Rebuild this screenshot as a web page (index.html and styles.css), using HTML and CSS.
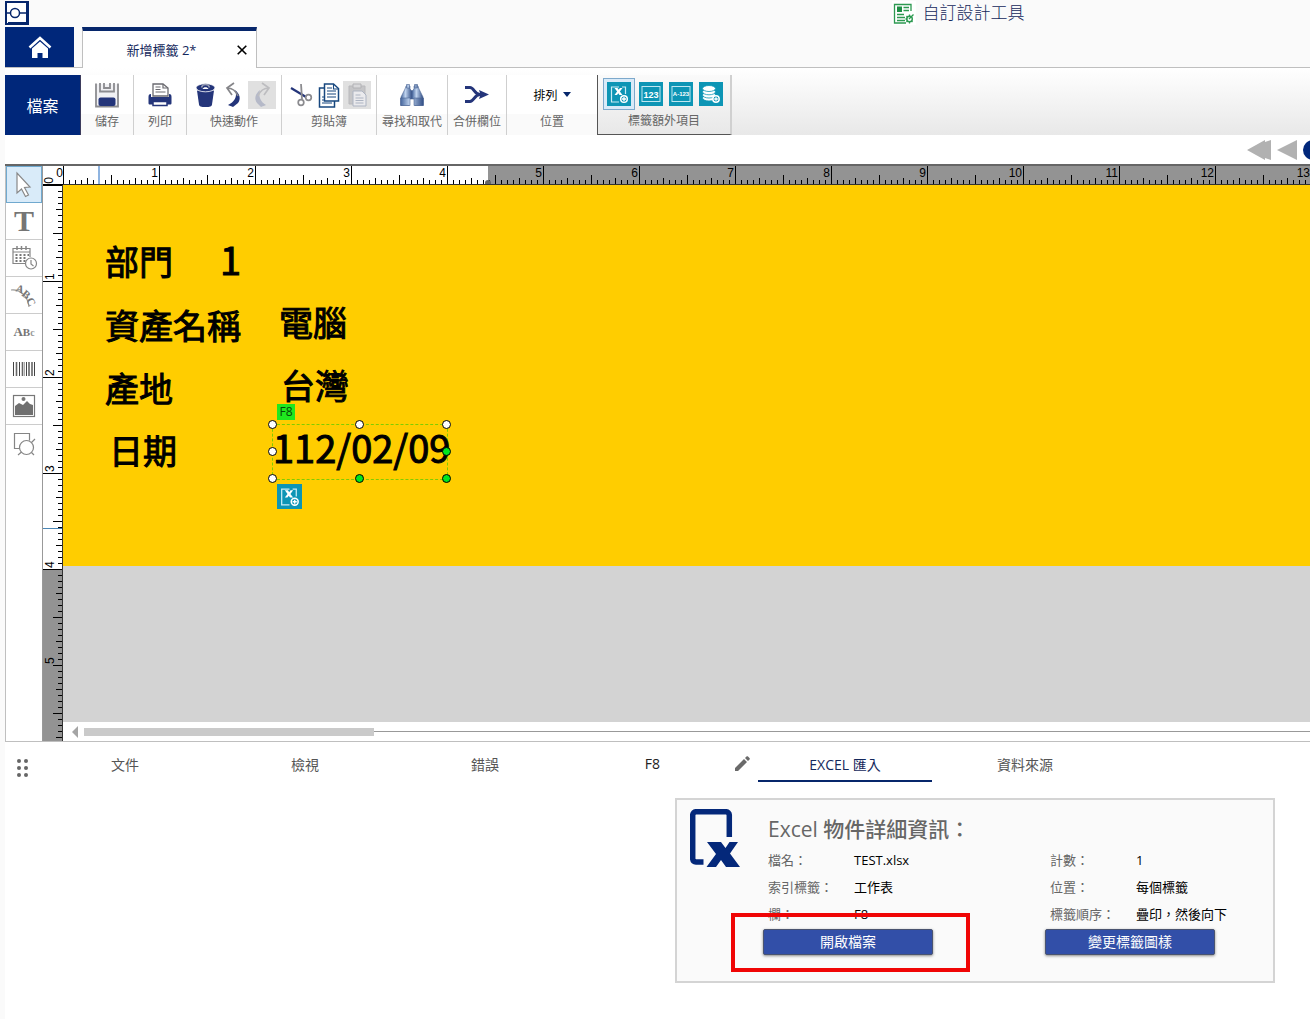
FILE: index.html
```html
<!DOCTYPE html>
<html lang="zh-Hant">
<head>
<meta charset="utf-8">
<title>新增標籤 2*</title>
<link rel="stylesheet" href="styles.css">
</head>
<body>
<svg class="defs" aria-hidden="true">
  <symbol id="excel-plus" viewBox="0 0 24 24">
    <rect width="24" height="24" fill="#0d95b5"/>
    <path d="M12 5H4.500v15H12M15 5h3.500v7" fill="none" stroke="#c9ecf5" stroke-width="1.200"/>
    <path d="M7.500 6h3l1.200 1.800L13 6h2.500l-2.600 3.500 2.600 3.500h-3l-1.200-1.800L10 13H7.500l2.600-3.500z" fill="#fff"/>
    <circle cx="17" cy="17" r="3.300" fill="none" stroke="#fff" stroke-width="1.500"/>
    <path d="M17 15v4M15 17h4" stroke="#fff" stroke-width="1.300"/>
  </symbol>
</svg>
<div class="app">
  <header class="header">
    <div class="titlebar">
      <svg class="logo" width="24" height="24" viewBox="0 0 24 24"><rect x="1" y="1" width="22" height="22" fill="#fff" stroke="#06266b" stroke-width="2"/><path d="M22 2v20H3" fill="none" stroke="#06266b" stroke-width="2"/><circle cx="10" cy="12" r="4.500" fill="none" stroke="#06266b" stroke-width="1.500"/><path d="M2 12h3.500M14.500 12H21" stroke="#06266b" stroke-width="1.500"/></svg>
      <a class="designer" href="#designer">
        <svg width="24" height="24" viewBox="0 0 24 24"><rect width="24" height="24" fill="#fff"/><path d="M19 10V3.500H2.500V22H14" fill="none" stroke="#2c9950" stroke-width="1.300"/><path d="M5 5.500h5V11H5z" fill="#1f8f45"/><path d="M11.500 6.500H17M11.500 9.500H17M5 13.500h7M5 16.500h8M5 19.500h8" stroke="#2c9950" stroke-width="1.600"/><circle cx="17.500" cy="18" r="2.800" fill="none" stroke="#2c9950" stroke-width="1.400"/><path d="M17.500 13.500v2M17.500 20.500v2M13.500 18h2M14.500 15l1.300 1.300M14.500 21l1.300-1.300M20.500 21l-1-1M17 18l4.500-4.500" stroke="#2c9950" stroke-width="1.300"/></svg>
        <span>自訂設計工具</span>
      </a>
    </div>
    <div class="tabs">
      <button class="home" aria-label="首頁"><svg width="24" height="24" viewBox="0 0 24 24"><path d="M1.500 12.500 12 3l10.500 9.500" fill="none" stroke="#fff" stroke-width="2.600"/><path d="M4 13.500 12 6.500l8 7V23h-5.500v-5h-5v5H4z" fill="#fff"/></svg></button>
      <div class="doc-tab"><span class="doc-name">新增標籤 2*</span><button class="close" aria-label="關閉"><svg width="10" height="10" viewBox="0 0 10 10"><path d="M.7.7l8.600 8.600M9.300.7.7 9.300" stroke="#000" stroke-width="1.600"/></svg></button></div>
    </div>
  </header>

  <nav class="ribbon">
    <button class="file">檔案</button>
    <section class="group save"><div class="icons"><button aria-label="儲存"><svg width="26" height="26" viewBox="0 0 26 26"><path d="M2 2v22h22V2z" fill="#f1f1f4"/><path d="M2 1.500v23h22v-23M6 1v8.500h14V1M10 1v5h6V1" fill="none" stroke="#8c8c90" stroke-width="1.800"/><rect x="4.500" y="15.500" width="17" height="8.500" rx="2" fill="#24357a"/></svg></button></div><h2>儲存</h2></section>
    <section class="group print"><div class="icons"><button aria-label="列印"><svg width="26" height="26" viewBox="0 0 26 26"><path d="M6 14V2h10l5 4v8z" fill="#fff" stroke="#6a6a70" stroke-width="1.300"/><path d="M16 2v4h5M8.500 5h5M8.500 7.500h5M8.500 10h10" fill="none" stroke="#6a6a70" stroke-width="1.200"/><path d="M4 12v3h18v-3c2 0 2.500 1 2.500 3v6c0 1-.5 1.500-1.500 1.500H3c-1 0-1.500-.5-1.500-1.500v-6c0-2 .5-3 2.500-3z" fill="#24357a"/><path d="M6 19.500h14v4H6z" fill="#fff" stroke="#24357a" stroke-width="1.500"/></svg></button></div><h2>列印</h2></section>
    <section class="group quick"><div class="icons">
      <button aria-label="刪除"><svg width="26" height="26" viewBox="0 0 26 26"><path d="M4 8.500h17l-2 14c-.4 2-2 2.500-6.500 2.500S6.400 24.500 6 22.500z" fill="#24357a"/><ellipse cx="12.500" cy="5.800" rx="9.500" ry="4" fill="#24357a" stroke="#fff" stroke-width=".8"/><path d="M8.500 5.500c1-4 7-4 8 0" fill="none" stroke="#9aa0b5" stroke-width="1.400"/><path d="M9.500 7c1-2.500 5-2.500 6 0z" fill="#fff"/></svg></button>
      <button aria-label="復原"><svg width="26" height="26" viewBox="0 0 26 26"><path d="M14 8c5 4 6 9 3 13l-5 4c-1-1-4-1-5-2 6-3 10-8 7-15z" fill="#24357a"/><path d="M13 1 6 6l5 7M6 6c5 0 9 3 11 8" fill="none" stroke="#858589" stroke-width="1.700"/></svg></button>
      <button class="off" disabled aria-label="重做"><svg width="26" height="26" viewBox="0 0 26 26"><path d="M11 8c-5 4-6 9-3 13l4 4c1-1 4-1 5-2-5-3-8-8-6-15z" fill="#b5b9c8"/><path d="m13 1 7 5-5 7M20 6c-5 0-9 3-11 8" fill="none" stroke="#bdbdc0" stroke-width="1.700"/></svg></button>
    </div><h2>快速動作</h2></section>
    <section class="group clip"><div class="icons">
      <button aria-label="剪下"><svg width="26" height="26" viewBox="0 0 26 26"><path d="m3 6 15 9" stroke="#24357a" stroke-width="2.200"/><path d="M13 2l1 15" stroke="#8b8b8f" stroke-width="1.800"/><circle cx="13" cy="20.500" r="2.800" fill="none" stroke="#8b8b8f" stroke-width="1.700"/><circle cx="20.500" cy="15.500" r="2.800" fill="none" stroke="#8b8b8f" stroke-width="1.700"/></svg></button>
      <button aria-label="複製"><svg width="26" height="26" viewBox="0 0 26 26"><path d="M3.500 6h12l3 3v16h-15z" fill="#fff" stroke="#17477f" stroke-width="1.500"/><path d="M6 15h8M6 18h8M6 21h10" stroke="#17477f"/><path d="M8.500 2h9l5 4.500V19h-14z" fill="#fff" stroke="#17477f" stroke-width="1.500"/><path d="M17.500 2v5h5M11 6h5M11 9h9M11 12h9M11 15h9" fill="none" stroke="#17477f" stroke-width="1.100"/></svg></button>
      <button class="off" disabled aria-label="貼上"><svg width="26" height="26" viewBox="0 0 26 26"><path d="M5 4h16v18H5z" fill="#c5c5c7" stroke="#b9b9bc"/><path d="M9 2h8v4H9z" fill="#d8d8da" stroke="#b2b2b5"/><path d="M9 9h9l4 4v11H9z" fill="#eaeaed" stroke="#adb4c2"/><path d="M11.500 13h5M11.500 16h8M11.500 18.500h8M11.500 21h8" stroke="#adb4c2"/></svg></button>
    </div><h2>剪貼簿</h2></section>
    <section class="group find"><div class="icons"><button aria-label="尋找和取代"><svg width="26" height="26" viewBox="0 0 26 26"><defs><linearGradient id="lens"><stop offset="0" stop-color="#42639b"/><stop offset=".4" stop-color="#c0d4ef"/><stop offset="1" stop-color="#304d85"/></linearGradient></defs><g fill="url(#lens)" stroke="#4b6493" stroke-width=".6"><path d="M7 4h4v3l2 2v8H10v6.500H2V15l3-6 1-2z"/><path d="M19 4h-4v3l-2 2v8h3v6.500h8V15l-3-6-1-2z"/><path d="M1.500 16h9.500v7.500H1.500zM15 16h9.500v7.500H15zM7.500 2.500h3V6h-3zM15.500 2.500h3V6h-3z"/></g></svg></button></div><h2>尋找和取代</h2></section>
    <section class="group merge"><div class="icons"><button aria-label="合併欄位"><svg width="26" height="26" viewBox="0 0 26 26"><path d="M1 5.500h5c4 0 4.500 7 10 7h3M1 19.500h5c4 0 4.500-7 10-7" fill="none" stroke="#24357a" stroke-width="3"/><path d="M15 8 25 12.500 15 17l1.500-4.500z" fill="#24357a"/></svg></button></div><h2>合併欄位</h2></section>
    <section class="group place"><div class="icons"><button class="arrange">排列 <svg width="8" height="5" viewBox="0 0 8 5"><path d="M0 0h8L4 5z" fill="#06266b"/></svg></button></div><h2>位置</h2></section>
    <section class="group extra"><div class="icons">
      <button class="on" aria-label="Excel"><svg width="24" height="24"><use href="#excel-plus"/></svg></button>
      <button aria-label="計數器"><svg width="24" height="24" viewBox="0 0 24 24"><rect width="24" height="24" fill="#0d95b5"/><rect x="3" y="4.500" width="18" height="15" fill="none" stroke="#bfe7f1"/><text x="12" y="15.500" class="badge-text num">123</text></svg></button>
      <button aria-label="序列"><svg width="24" height="24" viewBox="0 0 24 24"><rect width="24" height="24" fill="#0d95b5"/><rect x="3" y="4.500" width="18" height="15" fill="none" stroke="#bfe7f1"/><text x="12" y="14" class="badge-text seq">A-123</text></svg></button>
      <button aria-label="資料庫"><svg width="24" height="24" viewBox="0 0 24 24"><rect width="24" height="24" fill="#0d95b5"/><g fill="#fff" stroke="#0d95b5" stroke-width=".8"><ellipse cx="10" cy="16" rx="6.500" ry="3"/><ellipse cx="10" cy="13" rx="6.500" ry="3"/><ellipse cx="10" cy="9.800" rx="6.500" ry="3"/><ellipse cx="10" cy="6.500" rx="6.500" ry="3"/></g><circle cx="17" cy="17" r="3.200" fill="#0d95b5" stroke="#fff" stroke-width="1.500"/><path d="M17 15.200v3.600M15.200 17h3.600" stroke="#fff" stroke-width="1.300"/></svg></button>
    </div><h2>標籤額外項目</h2></section>
    <div class="ribbon-rest"></div>
  </nav>

  <div class="pager">
    <button aria-label="第一頁"><svg width="24" height="20" viewBox="0 0 24 20"><path d="M0 10 18 0v2l6-2v20l-6-2v2z" fill="#b1b1b1"/></svg></button>
    <button aria-label="上一頁"><svg width="20" height="20" viewBox="0 0 20 20"><path d="M0 10 20 0v20z" fill="#b1b1b1"/></svg></button>
    <button class="page" aria-label="目前頁"></button>
  </div>

  <main class="workspace">
    <div class="tools">
      <button class="on" aria-label="選取"><svg width="28" height="28" viewBox="0 0 28 28"><path d="M7 2v20l4.500-4 4 7.500 3-1.500-4-7.500 5.500-.5z" fill="#fff" stroke="#888" stroke-width="1.200"/></svg></button>
      <button class="type" aria-label="文字">T</button>
      <button aria-label="日期時間"><svg width="28" height="28" viewBox="0 0 28 28"><path d="M17 19.500H3V4.500h17V13M3 8h17" fill="none" stroke="#858585" stroke-width="1.200"/><path d="M7 2v4M11.500 2v4M16 2v4" stroke="#858585" stroke-width="1.500"/><path d="M5.500 11H19M5.500 14h11M5.500 17h11" stroke="#777" stroke-width="1.800" stroke-dasharray="2 2"/><circle cx="21" cy="19.500" r="5.500" fill="#fff" stroke="#858585" stroke-width="1.200"/><path d="M21 16v4l2.500 2" fill="none" stroke="#858585" stroke-width="1.200"/></svg></button>
      <button aria-label="弧形文字"><svg width="28" height="28" viewBox="0 0 28 28"><path d="M1 9c9-1 17 6 18 17" fill="none" stroke="#999" stroke-width="1.100"/><g class="arc-text"><text transform="translate(5 10) rotate(20)">A</text><text transform="translate(11 14) rotate(40)">B</text><text transform="translate(16 19) rotate(62)">C</text></g></svg></button>
      <button class="abc" aria-label="調整文字">A<small>B</small><sub>c</sub></button>
      <button aria-label="條碼"><svg width="28" height="28" viewBox="0 0 28 28"><path d="M3.500 7v14M9.500 7v14M16.500 7v14M24.500 7v14" stroke="#444" stroke-width="1"/><path d="M6.500 7v14M12.500 7v14M19 7v14M22 7v14" stroke="#666" stroke-width="1.600"/><path d="M14.500 7v14" stroke="#aaa"/></svg></button>
      <button aria-label="圖片"><svg width="28" height="28" viewBox="0 0 28 28"><rect x="3.500" y="3.500" width="21" height="21" fill="#fff" stroke="#777" stroke-width="1.200"/><path d="M5 23V14l4-3 4 2 4-4 3 3 3 1v10z" fill="#6f6f6f"/><circle cx="13.500" cy="7" r="2" fill="#777"/></svg></button>
      <button aria-label="圖形"><svg width="28" height="28" viewBox="0 0 28 28"><path d="M11 18.500H4.500v-15h15v7" fill="none" stroke="#858585" stroke-width="1.200"/><circle cx="16.500" cy="17.500" r="7" fill="#fff" stroke="#858585" stroke-width="1.200"/><path d="m8 25 3.500-3M21.500 12.500 25 9M21.500 22.500 24 25" stroke="#858585" stroke-width="1.200"/></svg></button>
    </div>
    <div class="ruler-corner"><span>0</span><span class="turned">0</span></div>
    <div class="ruler ruler-x"><span>1</span><span>2</span><span>3</span><span>4</span><span>5</span><span>6</span><span>7</span><span>8</span><span>9</span><span>10</span><span>11</span><span>12</span><span>13</span><i class="cursor"></i><i class="stop"></i></div>
    <div class="ruler ruler-y"><span>1</span><span>2</span><span>3</span><span>4</span><span>5</span><i class="cursor"></i></div>
    <div class="canvas">
      <div class="label">
        <p class="item t-dept">部門</p><p class="item t-one">1</p>
        <p class="item t-asset">資產名稱</p><p class="item t-pc">電腦</p>
        <p class="item t-origin">產地</p><p class="item t-tw">台灣</p>
        <p class="item t-date">日期</p>
        <div class="selected">
          <span class="field-tag">F8</span>
          <p class="field">112/02/09</p>
          <i class="h nw"></i><i class="h n"></i><i class="h ne"></i><i class="h w"></i><i class="h e green"></i><i class="h sw"></i><i class="h s green"></i><i class="h se green"></i>
          <svg class="field-icon" width="25" height="25"><use href="#excel-plus"/></svg>
        </div>
      </div>
      <div class="scroll"><svg width="6" height="12" viewBox="0 0 6 12"><path d="M6 0v12L0 6z" fill="#a5a5a5"/></svg><div class="thumb"></div><div class="track"></div></div>
    </div>
  </main>

  <nav class="panel-tabs">
    <svg class="grip" width="12" height="19" viewBox="0 0 12 19"><g fill="#666"><circle cx="2" cy="2" r="2"/><circle cx="9" cy="2" r="2"/><circle cx="2" cy="9" r="2"/><circle cx="9" cy="9" r="2"/><circle cx="2" cy="16" r="2"/><circle cx="9" cy="16" r="2"/></g></svg>
    <button>文件</button>
    <button>檢視</button>
    <button>錯誤</button>
    <button class="named"><span>F8</span><svg width="16" height="16" viewBox="0 0 16 16"><path d="M1 15v-3l9-9 3 3-9 9zM11 2l1.500-1.500c.5-.5 1-.5 1.500 0L15.500 2c.5.5.5 1 0 1.500L14 5z" fill="#6a6a6a"/></svg></button>
    <button class="active">EXCEL 匯入</button>
    <button>資料來源</button>
  </nav>

  <section class="panel">
    <div class="card">
      <svg class="card-icon" width="50" height="59" viewBox="0 0 50 59"><path d="M13.500 53H6A3.500 3.500 0 0 1 2.700 50V6A3.500 3.500 0 0 1 6 2.700h30A3.500 3.500 0 0 1 39.300 6v22" fill="none" stroke="#04287a" stroke-width="5.500"/><path d="M17 33h14l4.500 6 4-6H48L40 44.500 50 58H36l-5-7-5 7H16.500L26 45z" fill="#04287a"/></svg>
      <div class="details">
        <h1>Excel 物件詳細資訊：</h1>
        <div class="columns">
          <div class="col">
            <dl><dt>檔名：</dt><dd>TEST.xlsx</dd><dt>索引標籤：</dt><dd>工作表</dd><dt>欄：</dt><dd>F8</dd></dl>
            <button class="action">開啟檔案</button>
          </div>
          <div class="col">
            <dl><dt>計數：</dt><dd>1</dd><dt>位置：</dt><dd>每個標籤</dd><dt>標籤順序：</dt><dd>疊印，然後向下</dd></dl>
            <button class="action">變更標籤圖樣</button>
          </div>
        </div>
      </div>
      <div class="highlight"></div>
    </div>
  </section>
</div>
</body>
</html>
```
FILE: styles.css
```css
* { box-sizing: border-box; }
body {
  margin: 0;
  background: #fafafa;
  font-family: "Open Sans", "Noto Sans CJK TC", sans-serif;
  font-size: 13px;
  color: #000;
}
button {
  margin: 0;
  padding: 0;
  border: 0;
  background: none;
  font: inherit;
  color: inherit;
  display: flex;
  align-items: center;
  justify-content: center;
  flex: none;
}
svg { display: block; flex: none; }
h1, h2, p, dl, dd { margin: 0; font-weight: 400; }
.defs { position: absolute; width: 0; height: 0; }
.app { margin-left: 5px; min-height: 100vh; background: #fff; overflow: hidden; }

.header { background: #fafafa; border-bottom: 1px solid #bfbfbf; }
.titlebar { height: 27px; padding-bottom: 2px; display: grid; grid-template-columns: 68% auto; align-items: center; }
.designer { display: flex; align-items: center; gap: 6px; font-size: 17px; line-height: 24px; color: #14285c; text-decoration: none; font-weight: 300; }
.tabs { display: flex; gap: 8px; height: 40px; }
.home { width: 69px; height: 40px; background: #00277a; }
.doc-tab {
  width: 175px;
  height: 41px;
  display: flex;
  align-items: center;
  background: #fff;
  border: 1px solid #bfbfbf;
  border-top: 4px solid #06266b;
  border-bottom: 0;
}
.doc-name { flex: 1; padding-left: 12px; text-align: center; color: #14285c; }
.close { width: 28px; height: 30px; }

.ribbon { display: flex; height: 67px; padding-top: 7px; background: linear-gradient(#fff, #e8e8e8); }
.file { width: 76px; background: #00277a; border-right: 1px solid #3b3b5c; color: #fff; font-size: 16px; }
.group {
  display: flex;
  flex-direction: column;
  flex: none;
  background: linear-gradient(#fff 39px, #fafafa 39px);
  border-right: 1px solid #cfcfcf;
}
.icons { height: 39px; display: flex; align-items: center; justify-content: center; }
.group h2 { font-size: 12px; line-height: 16px; color: #666; text-align: center; white-space: nowrap; }
.save, .print { width: 53px; }
.quick, .clip { width: 95px; }
.find { width: 71px; }
.merge { width: 59px; }
.place { width: 90px; border-right: 0; }
.quick .icons button, .clip .icons button { width: 28px; height: 28px; }
.off { background: #e0e0e0; }
.arrange { gap: 5px; font-size: 12px; }
.extra { width: 135px; background: linear-gradient(#fafafa, #e8e8e8); border-left: 1px solid #555; border-right: 2px solid #d0d0d0; border-bottom: 1px solid #555; }
.extra .icons { gap: 6px; height: 38px; }
.extra .icons .on { width: 32px; height: 32px; margin: 0 -2px; background: #d9eaf8; border: 1px solid #7da9cc; }
.badge-text { fill: #fff; text-anchor: middle; font-family: "Liberation Sans", sans-serif; font-weight: 700; }
.num { font-size: 9px; }
.seq { font-size: 6px; }
.ribbon-rest { flex: 1; }

.pager { height: 29px; display: flex; align-items: center; justify-content: flex-end; gap: 6px; overflow: hidden; }
.page { width: 20px; height: 20px; border-radius: 50%; background: #00277a; margin-right: -13px; }

.workspace {
  display: grid;
  grid-template: 19px 556px / 38px 20px minmax(0, 1fr);
  border-top: 2px solid #666;
  border-bottom: 1px solid #bfbfbf;
}
.tools { grid-row: 1 / 3; border-left: 1px solid #bfbfbf; border-right: 1px solid #999; }
.tools button { width: 36px; height: 37px; border-bottom: 1px solid #ccc; color: #757575; }
.tools button:last-child { border-bottom: 0; }
.tools .on { background: #d9ebf9; border: 1px solid #70a9cf; }
.tools .type { font: 700 30px "Liberation Serif", serif; }
.tools .abc { font: 700 13px "Liberation Serif", serif; align-items: baseline; line-height: 35px; }
.abc small { font-size: 11px; }
.abc sub { font-size: 10px; vertical-align: baseline; color: #999; }
.arc-text { font: 700 11px "Liberation Serif", serif; fill: #777; }

.ruler, .ruler-corner { font: 12px/15px "Liberation Sans", sans-serif; overflow: hidden; position: relative; }
.ruler-corner { display: flex; flex-direction: row-reverse; justify-content: space-between; border-bottom: 1px solid #000; }
.turned, .ruler-y span { writing-mode: vertical-rl; transform: rotate(180deg); }
.turned { align-self: flex-end; line-height: 13px; }
.ruler { display: flex; }
.ruler span { flex: none; }
.ruler-x {
  border-bottom: 1px solid #333;
  background:
    linear-gradient(90deg, #000 1px, transparent 1px) 0 100% / 6px 4px repeat-x,
    linear-gradient(90deg, #000 1px, transparent 1px) 0 100% / 24px 6px repeat-x,
    linear-gradient(90deg, #000 1px, transparent 1px) 0 100% / 48px 9px repeat-x,
    linear-gradient(90deg, #fff 425px, #939393 425px);
}
.ruler-x span { width: 96px; padding-right: 1px; text-align: right; border-left: 1px solid #000; }
.ruler-y {
  flex-direction: column;
  border-right: 1px solid #333;
  background:
    linear-gradient(#000 1px, transparent 1px) 100% 0 / 4px 6px repeat-y,
    linear-gradient(#000 1px, transparent 1px) 100% 0 / 6px 24px repeat-y,
    linear-gradient(#000 1px, transparent 1px) 100% 0 / 9px 48px repeat-y,
    linear-gradient(#fff 384px, #939393 384px);
}
/* The half turn puts the top border and padding at the lower end of each cell. */
.ruler-y span { height: 96px; width: 19px; line-height: 15px; padding-top: 1px; border-bottom: 1px solid #000; }
.cursor { position: absolute; }
.ruler-x .cursor { left: 35px; top: 0; width: 2px; height: 20px; background: #8fb4e0; }
.ruler-y .cursor { top: 343px; left: 0; width: 20px; height: 1px; background: #4a86b5; }
.stop { position: absolute; left: 422px; bottom: -2px; width: 6px; height: 6px; border-radius: 50%; background: #666; }

.canvas { display: flex; flex-direction: column; background: #d3d3d3; }
.label {
  position: relative;
  height: 381px;
  background: #ffcd00;
  font: 34px/40px "Noto Sans CJK TC", sans-serif;
  -webkit-text-stroke: 1px #000;
  overflow: hidden;
}
.item { position: absolute; white-space: nowrap; }
.t-dept { left: 42px; top: 56px; }
.t-one { left: 157px; top: 54px; font-size: 38px; }
.t-asset { left: 42px; top: 120px; }
.t-pc { left: 216px; top: 117px; }
.t-origin { left: 42px; top: 183px; }
.t-tw { left: 218px; top: 180px; }
.t-date { left: 46px; top: 245px; }
.selected { position: absolute; left: 209px; top: 239px; width: 176px; height: 56px; border: 1px dashed #7fcc00; }
.field { font-size: 38px; line-height: 44px; white-space: nowrap; }
.field-tag { position: absolute; left: 4px; top: -21px; width: 18px; height: 16px; background: #1fe81f; color: #064806; font: 12px/16px "Open Sans", sans-serif; text-align: center; -webkit-text-stroke: 0; }
.field-icon { position: absolute; left: 4px; top: 59px; }
.h { position: absolute; width: 9px; height: 9px; margin: -5px; border: 1px solid #000; border-radius: 50%; background: #fff; }
.green { background: #00e61f; }
.nw, .w, .sw { left: 0; }
.n, .s { left: 50%; }
.ne, .e, .se { left: 100%; }
.nw, .n, .ne { top: 0; }
.w, .e { top: 50%; }
.sw, .s, .se { top: 100%; }
.scroll { height: 19px; margin-top: auto; padding-left: 9px; display: flex; align-items: center; background: #fff; }
.thumb { width: 290px; height: 8px; margin-left: 6px; background: #cacaca; }
.track { flex: 1; height: 1px; background: #999; }

.panel-tabs { display: flex; gap: 6px; height: 40px; align-items: stretch; }
.grip { margin: 17px -2px 0 12px; }
.panel-tabs button { width: 174px; height: 40px; padding-top: 5px; border-bottom: 2px solid transparent; color: #555; font-size: 14px; }
.panel-tabs .grip + button { margin-left: 5px; }
.panel-tabs .named { justify-content: flex-end; gap: 74px; color: #222; padding-right: 2px; }
.panel-tabs .active { border-color: #06266b; color: #14285c; }

.panel { display: flex; justify-content: flex-end; padding: 16px 35px 36px; }
.card { position: relative; display: flex; width: 600px; height: 185px; padding: 9px 13px; gap: 28px; background: #fafafa; border: 2px solid #d4d4d4; }
.details { padding-top: 4px; }
.details h1 { font-size: 21px; line-height: 32px; font-weight: 500; color: #666; }
.columns { display: flex; gap: 112px; padding-top: 2px; }
.col { width: 170px; }
.col dl { display: grid; grid-template-columns: 86px auto; width: 200px; line-height: 27px; white-space: nowrap; }
.col dt { color: #666; }
.action { width: 170px; height: 26px; margin: 1px 0 0 -5px; padding-bottom: 3px; border: 1px solid #4a5470; border-radius: 2px; background: #324fa8; color: #fff; box-shadow: 0 1px 3px #888; font-size: 14px; }
.highlight { position: absolute; left: 54px; top: 113px; width: 239px; height: 59px; border: 4px solid #f00505; }
```
